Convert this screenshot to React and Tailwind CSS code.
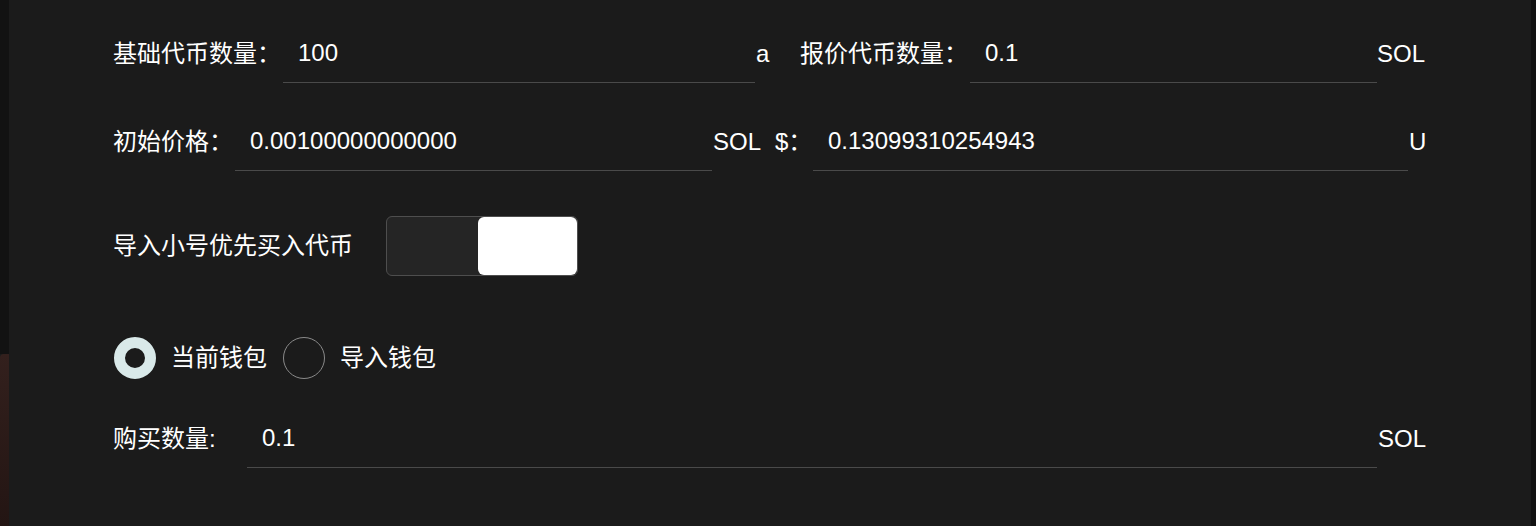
import React from "react";

const font = { fontFamily: '"Liberation Sans", "Noto Sans CJK SC", sans-serif' };

function Field({ width, value, pl = "pl-[15px]" }) {
  return (
    <div className={`h-[59px] border-b border-[#4a4a4a] flex items-center ${pl}`} style={{ width }}>
      <span>{value}</span>
    </div>
  );
}

export default function App() {
  return (
    <div className="w-[1536px] h-[526px] flex bg-[#1b1b1b] text-white text-[24px] leading-none overflow-hidden" style={font}>
      <div className="w-[9px] h-full flex flex-col shrink-0">
        <div className="h-[354px] bg-[#121212]" />
        <div className="flex-1 bg-gradient-to-b from-[#33201d] to-[#231513] rounded-tl-[4px]" />
      </div>
      <div className="flex-1 flex flex-col pl-[104px] pt-[24px]">
        {/* Row 1 */}
        <div className="flex items-center h-[59px]">
          <span className="w-[170px] shrink-0">基础代币数量：</span>
          <Field width="472px" value="100" />
          <span className="w-[45px] shrink-0 pl-[1px]">a</span>
          <span className="w-[170px] shrink-0">报价代币数量：</span>
          <Field width="407px" value="0.1" />
          <span className="shrink-0">SOL</span>
        </div>
        {/* Row 2 */}
        <div className="flex items-center h-[59px] mt-[29px]">
          <span className="w-[122px] shrink-0">初始价格：</span>
          <Field width="477px" value="0.00100000000000" />
          <span className="w-[63px] shrink-0 pl-[1px]">SOL</span>
          <span className="w-[38px] shrink-0">$：</span>
          <Field width="595px" value="0.13099310254943" />
          <span className="shrink-0 pl-[1px]">U</span>
        </div>
        {/* Row 3 */}
        <div className="flex items-center mt-[45px] h-[60px]">
          <span className="w-[273px] shrink-0">导入小号优先买入代币</span>
          <div className="w-[192px] h-[60px] rounded-[6px] border border-[#4e4e4e] bg-[#252525] flex justify-end">
            <div className="w-[99px] h-full rounded-[6px] bg-white" />
          </div>
        </div>
        {/* Row 4 */}
        <div className="flex items-center mt-[61px] h-[42px]">
          <div className="w-[42px] h-[42px] rounded-full border-[11px] border-[#d9e9e9] bg-[#1b1b1b] ml-[1px] shrink-0" />
          <span className="ml-[15px]">当前钱包</span>
          <div className="w-[42px] h-[42px] rounded-full border border-[#8a8a8a] ml-[16px] shrink-0" />
          <span className="ml-[15px]">导入钱包</span>
        </div>
        {/* Row 5 */}
        <div className="flex items-center h-[59px] mt-[30px]">
          <span className="w-[134px] shrink-0">购买数量:</span>
          <Field width="1130px" value="0.1" />
          <span className="shrink-0 pl-[1px]">SOL</span>
        </div>
      </div>
      <div className="w-[5px] h-full bg-[#111111] shrink-0" />
    </div>
  );
}
